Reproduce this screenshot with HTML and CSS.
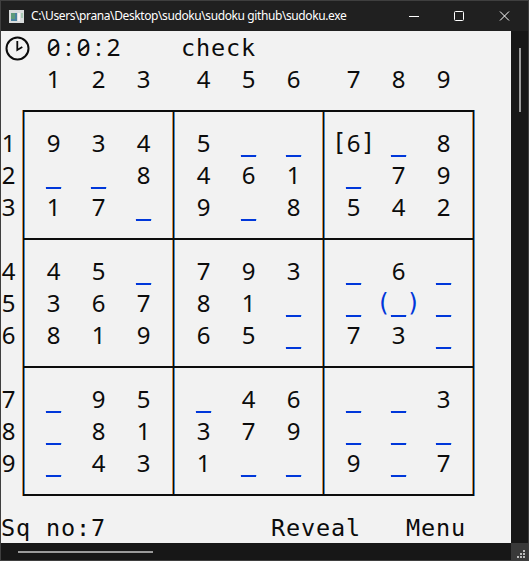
FILE: index.html
```html
<!DOCTYPE html>
<html lang="en">
<head>
<meta charset="utf-8">
<title>sudoku.exe</title>
<link rel="stylesheet" href="styles.css">
</head>
<body>
<div class="window">
  <header class="titlebar">
    <svg class="app-icon" width="15" height="13" viewBox="0 0 15 13"><rect width="15" height="13" fill="#d9dcdc"/><rect x="2" y="3" width="6" height="8" fill="#4b83a0"/><path d="M2 3h4v6H2z" fill="#5d9b7b"/><rect x="9" y="3" width="2" height="8" fill="#f5f3f5"/><rect x="12" y="3" width="2" height="5" fill="#a9c9b4"/></svg>
    <span class="title">C:\Users\prana\Desktop\sudoku\sudoku github\sudoku.exe</span>
    <svg class="controls" width="112" height="12" viewBox="0 0 112 12" fill="none" stroke="#fff"><path d="M1 6.5h10"/><rect x="46.5" y="1.5" width="9" height="9" rx="1"/><path d="M92 1.5l9 9M101 1.5l-9 9"/></svg>
  </header>
  <div class="body">
    <main class="console">
      <div class="line status">
        <svg class="clock" width="26" height="26" viewBox="0 0 26 26" fill="none" stroke="#0c0c0c"><circle cx="13.5" cy="13.5" r="11" stroke-width="2"/><path d="M13.3 6V15l5-3" stroke-width="1.8"/></svg>
        <span class="time"><b class="zero">0</b><b>:</b><b class="zero">0</b><b>:</b><b>2</b></span>
        <span class="word">check</span>
      </div>
      <div class="columns">
        <div class="trio"><span>1</span><span>2</span><span>3</span></div>
        <div class="trio"><span>4</span><span>5</span><span>6</span></div>
        <div class="trio"><span>7</span><span>8</span><span>9</span></div>
      </div>
      <div class="play">
        <div class="labels">
          <div class="group"><span>1</span><span>2</span><span>3</span></div>
          <div class="group"><span>4</span><span>5</span><span>6</span></div>
          <div class="group"><span>7</span><span>8</span><span>9</span></div>
        </div>
        <div class="board">
          <div class="box"><span>9</span><span>3</span><span>4</span><i>_</i><i>_</i><span>8</span><span>1</span><span>7</span><i>_</i></div>
          <div class="box"><span>5</span><i>_</i><i>_</i><span>4</span><span>6</span><span>1</span><span>9</span><i>_</i><span>8</span></div>
          <div class="box"><span class="marked"><em>[</em>6<em>]</em></span><i>_</i><span>8</span><i>_</i><span>7</span><span>9</span><span>5</span><span>4</span><span>2</span></div>
          <div class="box"><span>4</span><span>5</span><i>_</i><span>3</span><span>6</span><span>7</span><span>8</span><span>1</span><span>9</span></div>
          <div class="box"><span>7</span><span>9</span><span>3</span><span>8</span><span>1</span><i>_</i><span>6</span><span>5</span><i>_</i></div>
          <div class="box"><i>_</i><span>6</span><i>_</i><i>_</i><i class="marked"><em>(</em><u>_</u><em>)</em></i><i>_</i><span>7</span><span>3</span><i>_</i></div>
          <div class="box"><i>_</i><span>9</span><span>5</span><i>_</i><span>8</span><span>1</span><i>_</i><span>4</span><span>3</span></div>
          <div class="box"><i>_</i><span>4</span><span>6</span><span>3</span><span>7</span><span>9</span><span>1</span><i>_</i><i>_</i></div>
          <div class="box"><i>_</i><i>_</i><span>3</span><i>_</i><i>_</i><i>_</i><span>9</span><i>_</i><span>7</span></div>
        </div>
      </div>
      <div class="line footer"><span class="word">Sq no:7</span><span class="word reveal">Reveal</span><span class="word menu">Menu</span></div>
    </main>
    <div class="vscroll"><div class="vthumb"></div></div>
    <div class="hscroll"><div class="hthumb"></div></div>
    <div class="grip"><svg width="8" height="8" viewBox="0 0 8 8" fill="#bbb"><path d="M6 0h2v2H6zM3 3h2v2H3zM6 3h2v2H6zM0 6h2v2H0zM3 6h2v2H3zM6 6h2v2H6z"/></svg></div>
  </div>
</div>
</body>
</html>
```
FILE: styles.css
```css
* { box-sizing: border-box; }
body { margin: 0; overflow: hidden; background: #202020; }
.window {
  width: 529px; height: 561px;
  border: 1px solid #3f3f3f;
  background: #171717;
}
.titlebar {
  display: flex; align-items: center;
  height: 30px; padding: 0 8px 0 8px;
  background: #202020; color: #fff;
  font: 12px/28px "Noto Sans", sans-serif;
}
.title { margin-left: 7px; width: 322px; letter-spacing: -0.4px; white-space: nowrap; }
.controls { margin-left: auto; }
.body { display: grid; grid-template: 512px 17px / 510px 17px; }
.console {
  background: #f2f2f2; color: #0c0c0c;
  font: 24px/32px "Noto Sans", sans-serif;
}
.line { display: flex; height: 32px; }
.word { font-family: "DejaVu Sans Mono", monospace; font-size: 23.5px; line-height: 34px; letter-spacing: 0.85px; white-space: pre; }
.clock { margin: 4px 15px 0 3px; }
.time { display: flex; margin: 0 60px 0 1px; }
.time b { position: relative; width: 15px; text-align: center; font-weight: 400; }
.zero::after {
  content: ""; position: absolute; left: 2px; top: 16px;
  width: 11px; height: 1.6px; background: #0c0c0c; transform: rotate(-38deg);
}
.columns { display: flex; height: 32px; padding-left: 22.5px; }
.trio { display: grid; grid-template-columns: repeat(3, 45px); width: 150px; padding: 0 7.5px; text-align: center; }
.play { display: flex; height: 416px; }
.labels { width: 15px; padding-top: 16px; text-align: center; }
.group { display: grid; grid-template-rows: repeat(3, 32px); height: 128px; padding-top: 16px; }
.board {
  display: grid; grid-template: repeat(3, 128px) / repeat(3, 150px);
  height: 386px; margin: 15px 0 0 6px; width: 453px;
  background:
    linear-gradient(#0c0c0c, #0c0c0c) 1px 0 / 451px 2px no-repeat,
    linear-gradient(#0c0c0c, #0c0c0c) 1px 128px / 451px 2px no-repeat,
    linear-gradient(#0c0c0c, #0c0c0c) 1px 256px / 451px 2px no-repeat,
    linear-gradient(#0c0c0c, #0c0c0c) 1px 384px / 451px 2px no-repeat,
    linear-gradient(90deg, #dc8c3c 1px, #0c0c0c 1px 2px, #3a8cd8 2px 3px, transparent 3px) 0 0 / 150px 100%;
}
.box {
  display: grid; grid-template: repeat(3, 32px) / repeat(3, 45px);
  padding: 17px 6px 15px 9px; text-align: center;
}
.box > span, .box > i { display: flex; justify-content: center; height: 32px; }
i, u {
  color: #0037da; font-style: normal; text-decoration: none;
  background: linear-gradient(#0037da, #0037da) center 28px / 15px 2px no-repeat;
}
i { font: 25px/40px "Liberation Mono", monospace; }
i.marked { background: none; }
u { width: 15px; height: 32px; }
em { width: 15px; font: 24px/32px "DejaVu Sans Mono", monospace; text-align: center; }
.reveal { margin-left: 165px; }
.menu { margin-left: 45px; }
.vscroll { display: flex; justify-content: center; padding-top: 17px; background: #171717; }
.vthumb { width: 2px; height: 64px; background: #9a9a9a; }
.hscroll { padding: 8px 0 0 17px; background: #171717; }
.hthumb { width: 135px; height: 2px; background: #9a9a9a; }
.grip { display: flex; padding: 7px 0 0 6px; background: #393939; }
```
